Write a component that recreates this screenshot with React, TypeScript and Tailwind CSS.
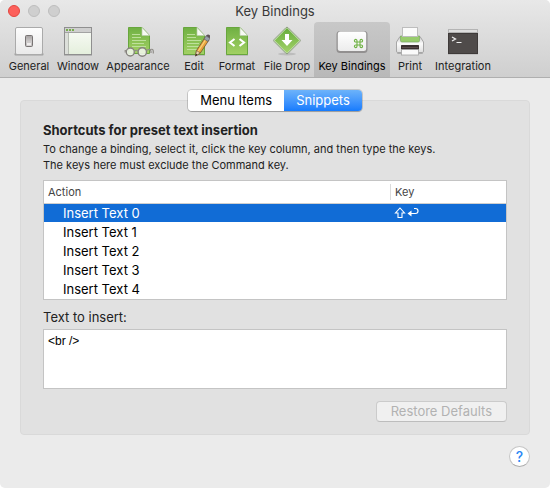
import { useState, ReactNode } from 'react';

const GeneralIcon = () => (
  <svg width="32" height="32" viewBox="0 0 32 32">
    <defs>
      <linearGradient id="plate" x1="0" y1="0" x2="0" y2="1">
        <stop offset="0" stopColor="#fdfdfd" />
        <stop offset="1" stopColor="#e9e9e9" />
      </linearGradient>
      <linearGradient id="toggle" x1="0" y1="0" x2="0" y2="1">
        <stop offset="0" stopColor="#a5a1a1" />
        <stop offset="0.6" stopColor="#d0cdcd" />
        <stop offset="1" stopColor="#b9b6b6" />
      </linearGradient>
    </defs>
    <rect x="1.5" y="28" width="29" height="2.5" rx="1" fill="#000" opacity="0.25" />
    <rect x="2.5" y="2.5" width="27" height="27" rx="1.5" fill="url(#plate)" stroke="#aaa" />
    <rect x="12.5" y="10.5" width="7" height="11" rx="1" fill="url(#toggle)" stroke="#777373" />
    <rect x="14" y="18" width="4" height="2.5" fill="#efeded" />
  </svg>
);

const WindowIcon = () => (
  <svg width="32" height="32" viewBox="0 0 32 32">
    <defs>
      <linearGradient id="pane" x1="0" y1="0" x2="0" y2="1">
        <stop offset="0" stopColor="#fafcf8" />
        <stop offset="1" stopColor="#e4efdc" />
      </linearGradient>
    </defs>
    <rect x="2" y="29" width="28" height="2" fill="#000" opacity="0.15" />
    <rect x="2.5" y="2.5" width="27" height="27" fill="url(#pane)" stroke="#8f8f8f" />
    <rect x="3" y="3" width="26" height="4" fill="#cfcfcf" />
    <path d="M3 7.5H29" stroke="#a3a3a3" />
    <rect x="3" y="8" width="3" height="21" fill="#dcdfda" />
    <path d="M6.5 8V29" stroke="#b8bdb4" />
    <g fill="#77ad4c">
      <rect x="4" y="4" width="2" height="2" />
      <rect x="7" y="4" width="2" height="2" />
      <rect x="10" y="4" width="2" height="2" />
    </g>
  </svg>
);

const Page = () => (
  <>
    <defs>
      <linearGradient id="page" x1="0" y1="0" x2="0" y2="1">
        <stop offset="0" stopColor="#6fb043" />
        <stop offset="1" stopColor="#a3d164" />
      </linearGradient>
    </defs>
    <rect x="5" y="29" width="22" height="1.5" fill="#000" opacity="0.25" />
    <path d="M5.5 2.5H19L26.5 10.5V29.5H5.5Z" fill="url(#page)" stroke="#68a63d" />
    <path d="M19 2.5V10.5H26.5Z" fill="#f7faf4" stroke="#b9ccaa" strokeWidth="0.7" />
  </>
);

const Lines = () => (
  <path
    d="M9 9.5H17M9 12.5H18M9 15.5H23M9 18.5H21M9 21.5H23M9 24.5H19"
    stroke="#c3e3a4"
    strokeWidth="0.9"
  />
);

const AppearanceIcon = () => (
  <svg width="32" height="32" viewBox="0 0 32 32">
    <path d="M6.5 2.500H20L27.500 10.500V28.500H6.500Z" fill="url(#page)" stroke="#68a63d" />
    <path d="M20 2.500V10.500H27.500Z" fill="#f7faf4" stroke="#b9ccaa" strokeWidth="0.700" />
    <path d="M10 9.500H18M10 12.500H19M10 15.500H24M10 18.500H22M10 21.500H24" stroke="#c3e3a4" strokeWidth="0.900" />
    <g fill="#eef5e8" fillOpacity="0.900" stroke="#85827d" strokeWidth="1.400">
      <circle cx="8.300" cy="27" r="4" />
      <circle cx="20.300" cy="27" r="4.200" />
    </g>
    <path
      d="M12.300 26.500Q14.300 24 16.200 26.500M4.500 25.500H3.200V27.500M24.500 25.500L26.500 24.500Q28.500 24 29 26.500V28M28.500 24.500Q31.300 23.500 31.300 26.500V28.500"
      fill="none"
      stroke="#918e89"
      strokeWidth="1.200"
    />
  </svg>
);

const EditIcon = () => (
  <svg width="32" height="32" viewBox="0 0 32 32">
    <Page />
    <Lines />
    <path d="M17.5 31L18.5 25.5L27 12.5L31 15L22.3 28Z" fill="#e9a43c" stroke="#6d5131" strokeWidth="0.8" />
    <path d="M20 26.5L28.5 13.5" stroke="#f9d27d" strokeWidth="1.3" />
    <path d="M17.5 31L18.5 25.5L22.3 28Z" fill="#ead5b2" stroke="#6d5131" strokeWidth="0.6" />
    <path d="M17.5 31L17.9 28.7L19.5 29.7Z" fill="#222" />
    <path d="M26 14L28 10.8L32 13.3L30 16.5Z" fill="#98a0a8" stroke="#555" strokeWidth="0.6" />
    <path d="M28 10.8Q30 8.5 31.500 10Q32.500 11 32 13.3Z" fill="#5c5358" />
  </svg>
);

const FormatIcon = () => (
  <svg width="32" height="32" viewBox="0 0 32 32">
    <Page />
    <path d="M13.5 14L9 17.5L13.5 21M18.5 14L23 17.5L18.5 21" fill="none" stroke="#fff" strokeWidth="2.1" />
  </svg>
);

const FileDropIcon = () => (
  <svg width="32" height="32" viewBox="0 0 32 32">
    <defs>
      <linearGradient id="diamond" x1="0" y1="0" x2="1" y2="1">
        <stop offset="0" stopColor="#67ad3d" />
        <stop offset="1" stopColor="#a4d26a" />
      </linearGradient>
    </defs>
    <ellipse cx="16" cy="29" rx="9" ry="1.5" fill="#000" opacity="0.12" />
    <rect x="6.2" y="5.7" width="19.6" height="19.6" rx="1.5" transform="rotate(45 16 15.5)" fill="#c5dfb0" stroke="#8a9a7e" strokeWidth="0.9" />
    <rect x="7.3" y="6.8" width="17.4" height="17.4" rx="0.5" transform="rotate(45 16 15.5)" fill="url(#diamond)" />
    <path d="M14 9H18V15H21.5L16 21L10.5 15H14Z" fill="#fff" />
  </svg>
);

const KeyIcon = () => (
  <svg width="32" height="32" viewBox="0 0 32 32">
    <defs>
      <linearGradient id="keycap" x1="0" y1="0" x2="0" y2="1">
        <stop offset="0" stopColor="#fff" />
        <stop offset="1" stopColor="#ececec" />
      </linearGradient>
    </defs>
    <rect x="0.5" y="6" width="31" height="22" rx="3.5" fill="#929090" />
    <rect x="1.8" y="6.6" width="28.4" height="19.4" rx="2.5" fill="url(#keycap)" />
    <path
      transform="translate(18 14)"
      d="M3 3H6V6H3ZM3 3V1.7A1.3 1.3 0 1 0 1.7 3ZM6 3V1.7A1.3 1.3 0 1 1 7.3 3ZM3 6V7.3A1.3 1.3 0 1 1 1.7 6ZM6 6V7.3A1.3 1.3 0 1 0 7.3 6Z"
      fill="none"
      stroke="#6fb244"
      strokeWidth="1.1"
    />
  </svg>
);

const PrintIcon = () => (
  <svg width="32" height="32" viewBox="0 0 32 32">
    <defs>
      <linearGradient id="printer" x1="0" y1="0" x2="0" y2="1">
        <stop offset="0" stopColor="#c9c9c9" />
        <stop offset="0.45" stopColor="#fbfbfb" />
        <stop offset="1" stopColor="#dedede" />
      </linearGradient>
    </defs>
    <rect x="3" y="27" width="26" height="2" rx="1" fill="#000" opacity="0.2" />
    <path d="M6 11.5H26L29.5 17V26Q29.5 27.5 28.5 27.5H3.5Q2.500 27.5 2.5 26V17Z" fill="url(#printer)" stroke="#a6a6a6" />
    <path d="M6.5 11H25.500V15.500Q25.500 17 24 17H8Q6.500 17 6.500 15.500Z" fill="#97cc6c" stroke="#7da764" strokeWidth="0.7" />
    <rect x="8.5" y="2.5" width="15" height="9" fill="#fbfbfb" stroke="#bdbdbd" />
    <rect x="7" y="20" width="18" height="5.5" rx="0.5" fill="#3a3030" />
    <path d="M8 22.500H24" stroke="#5a4c4c" />
    <rect x="7.5" y="24.5" width="17" height="5.5" fill="#fafafa" stroke="#a3a3a3" strokeWidth="0.8" />
  </svg>
);

const TerminalIcon = () => (
  <svg width="32" height="32" viewBox="0 0 32 32">
    <rect x="1" y="28" width="30" height="1.5" fill="#000" opacity="0.2" />
    <rect x="1" y="4" width="30" height="25" fill="#3e3a39" />
    <rect x="1.5" y="4.5" width="29" height="3" fill="#dedede" stroke="#b4b4b4" />
    <rect x="2" y="9" width="28" height="19" fill="#4f4b4a" />
    <path d="M5 12L8.5 14L5 16" fill="none" stroke="#eee" strokeWidth="1.3" />
    <path d="M9.5 17.5H14.5" stroke="#eee" />
  </svg>
);

type ToolbarItem = { label: string; width: string; icon: ReactNode };

const toolbar: ToolbarItem[] = [
  { label: 'General', width: 'w-[50px]', icon: <GeneralIcon /> },
  { label: 'Window', width: 'w-12', icon: <WindowIcon /> },
  { label: 'Appearance', width: 'w-[72px]', icon: <AppearanceIcon /> },
  { label: 'Edit', width: 'w-10', icon: <EditIcon /> },
  { label: 'Format', width: 'w-[46px]', icon: <FormatIcon /> },
  { label: 'File Drop', width: 'w-[54px]', icon: <FileDropIcon /> },
  { label: 'Key Bindings', width: 'w-[76px]', icon: <KeyIcon /> },
  { label: 'Print', width: 'w-10', icon: <PrintIcon /> },
  { label: 'Integration', width: 'w-[66px]', icon: <TerminalIcon /> },
];

const ShortcutKeys = () => (
  <svg width="26" height="12" viewBox="0 0 26 12" fill="none" stroke="#fff" role="img" aria-label="Shift Return">
    <path d="M6 1L10.500 6H8V10.500H4V6H1.500Z" strokeWidth="1.1" />
    <path d="M20 1.500H21.500Q24 1.500 24 4T21.500 6.500H15" strokeWidth="1.2" />
    <path d="M17.500 3.500L13.500 6.500L17.500 9.500Z" fill="#fff" stroke="none" />
  </svg>
);

export default function App() {
  const [pane, setPane] = useState<string>('Key Bindings');
  const [tab, setTab] = useState<string>('Snippets');
  const [selected, setSelected] = useState<number>(0);
  const [text, setText] = useState<string>('<br />');

  return (
    <div className="min-h-screen bg-white font-['Inter',sans-serif] text-[#222]">
      <div className="min-h-screen rounded-[5px] bg-[#ebebeb] overflow-hidden">
        <header className="border-b border-[#afafaf] bg-linear-to-b from-[#e8e8e8] to-[#cfcfcf]">
          <div className="grid grid-cols-[1fr_auto_1fr] items-center h-[22px] px-2">
            <div className="flex gap-2">
              <button aria-label="Close" className="size-3 rounded-full border border-[#e2463f] bg-[#fc605b]" />
              <button aria-label="Minimize" className="size-3 rounded-full border border-[#bdbdbd] bg-[#cfcfcf]" />
              <button aria-label="Zoom" className="size-3 rounded-full border border-[#bdbdbd] bg-[#cfcfcf]" />
            </div>
            <h1 className="text-[13px] leading-5 text-[#383838]">Key Bindings</h1>
          </div>
          <nav className="flex px-1">
            {toolbar.map((item) => (
              <button
                key={item.label}
                onClick={() => setPane(item.label)}
                className={`${item.width} flex flex-col items-center shrink-0 h-[55px] pt-[3px] text-[11px] leading-[18px] whitespace-nowrap rounded-t-[4px] ${
                  pane === item.label ? 'bg-linear-to-b from-[#c8c8c8] to-[#b8b8b8] text-black' : ''
                }`}
              >
                {item.icon}
                {item.label}
              </button>
            ))}
          </nav>
        </header>

        <main className="px-5 pt-3 pb-5">
          <div className="relative z-10 flex justify-center -mb-[11px]">
            <div className="flex h-[21px] rounded-[4px] shadow-[0_0_0_1px_#00000026,0_1px_1px_#00000030] overflow-hidden text-[13px] leading-[21px]">
              {['Menu Items', 'Snippets'].map((name) => (
                <button
                  key={name}
                  onClick={() => setTab(name)}
                  className={`px-3 ${
                    tab === name ? 'bg-linear-to-b from-[#6cb3fa] to-[#147bfd] text-white' : 'bg-white text-black'
                  }`}
                >
                  {name}
                </button>
              ))}
            </div>
          </div>

          <section className="rounded-[4px] border border-[#d9d9d9] bg-[#e1e1e1] px-[22px] pt-5 pb-3">
            <h2 className="text-[13px] leading-[18px] font-bold">Shortcuts for preset text insertion</h2>
            <p className="mt-[2px] text-[11px] leading-4">
              To change a binding, select it, click the key column, and then type the keys.
              <br />
              The keys here must exclude the Command key.
            </p>

            <div className="mt-[7px] h-[120px] border border-[#c4c4c4] bg-white overflow-hidden">
              <table className="w-full table-fixed">
                <thead>
                  <tr className="h-[22px] border-b border-[#cfcfcf] text-left text-[11px] leading-4 text-[#444]">
                    <th className="px-1 font-normal">Action</th>
                    <th className="w-[116px] font-normal">
                      <div className="border-l border-[#dcdcdc] pl-1">Key</div>
                    </th>
                  </tr>
                </thead>
                <tbody>
                  {[0, 1, 2, 3, 4].map((n) => (
                    <tr
                      key={n}
                      onClick={() => setSelected(n)}
                      className={`h-[19px] border-b border-white text-[13px] leading-[18px] ${
                        selected === n ? 'bg-[#116cd6] text-white' : 'text-black'
                      }`}
                    >
                      <td className="pl-[19px]">Insert Text {n}</td>
                      <td className="pl-1">{n === 0 && <ShortcutKeys />}</td>
                    </tr>
                  ))}
                </tbody>
              </table>
            </div>

            <label htmlFor="snippet" className="block mt-[9px] text-[13px] leading-4">
              Text to insert:
            </label>
            <textarea
              id="snippet"
              value={text}
              onChange={(e) => setText(e.target.value)}
              className="block mt-1 w-full h-[60px] resize-none border border-[#c4c4c4] bg-white px-1 py-[3px] font-['Liberation_Sans',sans-serif] text-[12px] leading-4 text-black outline-none"
            />
            <div className="flex justify-end mt-3">
              <button
                disabled
                className="h-[21px] px-[14px] rounded-[4px] border border-[#cbcbcb] border-b-[#bdbdbd] bg-[#f0f0f0] text-[13px] leading-[19px] text-[#b2b2b2]"
              >
                Restore Defaults
              </button>
            </div>
          </section>

          <div className="flex justify-end mt-[11px]">
            <button
              aria-label="Help"
              className="size-[21px] rounded-full border border-[#c6c6c6] border-b-[#adadad] bg-white text-[14px] leading-[19px] font-medium text-[#2a87f5]"
            >
              ?
            </button>
          </div>
        </main>
      </div>
    </div>
  );
}
